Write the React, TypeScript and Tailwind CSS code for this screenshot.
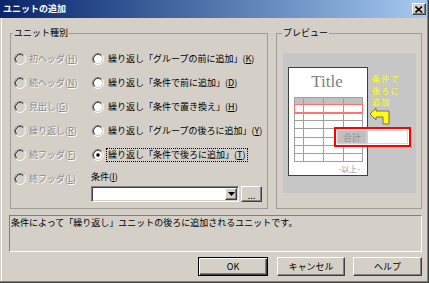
import React from "react";

const raised =
  "bg-[#d4d0c8] border border-t-white border-l-white border-r-[#404040] border-b-[#404040] shadow-[inset_-1px_-1px_0_#808080,inset_1px_1px_0_#d4d0c8]";

function Radio({ disabled, checked }: { disabled?: boolean; checked?: boolean }) {
  const bg = disabled ? "#d4d0c8" : "#ffffff";
  return (
    <svg width="12" height="12" viewBox="0 0 12 12" className="shrink-0">
      <circle cx="6" cy="6" r="4.2" fill={bg} />
      <path d="M2.11 9.89 A5.5 5.5 0 0 1 9.89 2.11" fill="none" stroke="#808080" strokeWidth="1" />
      <path d="M9.89 2.11 A5.5 5.5 0 0 1 2.11 9.89" fill="none" stroke="#ffffff" strokeWidth="1" />
      <path d="M2.82 9.18 A4.5 4.5 0 0 1 9.18 2.82" fill="none" stroke="#404040" strokeWidth="1" />
      <path d="M9.18 2.82 A4.5 4.5 0 0 1 2.82 9.18" fill="none" stroke="#d4d0c8" strokeWidth="1" />
      {checked && <circle cx="6" cy="6" r="1.8" fill="#000" />}
    </svg>
  );
}

function Mn({ pre, k }: { pre: string; k: string }) {
  return (
    <>
      {pre}(<u className="underline-offset-1">{k}</u>)
    </>
  );
}

const disabledText = "text-[#8a8a8a] [text-shadow:1px_1px_0_#ffffff]";

function Row1({ pre, k }: { pre: string; k: string }) {
  return (
    <div className="h-[24px] flex items-center gap-[3px]">
      <Radio disabled />
      <span className={`whitespace-nowrap ${disabledText}`}>
        <Mn pre={pre} k={k} />
      </span>
    </div>
  );
}

function Row2({ pre, k, checked }: { pre: string; k: string; checked?: boolean }) {
  return (
    <div className="h-[24px] flex items-center gap-[2px] pl-[1px]">
      <Radio checked={checked} />
      <span
        className={`whitespace-nowrap text-black px-[1px] border ${
          checked ? "border-dotted border-black" : "border-transparent"
        }`}
      >
        <Mn pre={pre} k={k} />
      </span>
    </div>
  );
}

function Preview() {
  const cols = [11, 20, 40, 60, 79];
  const rows = [44, 51, 60, 67, 75, 84, 92, 100, 108];
  return (
    <div className="relative w-[133px] h-[140px]">
      <svg width="133" height="140" viewBox="0 0 133 140" className="block">
        <rect x="0" y="0" width="133" height="140" fill="#c6c6c6" />
        <rect x="5.5" y="14.5" width="79" height="108" fill="#ffffff" stroke="#404040" strokeWidth="1" />
        <text
          x="44"
          y="34"
          textAnchor="middle"
          fontFamily="'Liberation Serif', serif"
          fontSize="17"
          fill="#808080"
        >
          Title
        </text>
        <rect x="11" y="44" width="68" height="7" fill="#c0c0c0" />
        {cols.map((x) => (
          <line key={"c" + x} x1={x + 0.5} y1="44" x2={x + 0.5} y2="108" stroke="#a0a0a0" strokeWidth="1" />
        ))}
        {rows.map((y) => (
          <line key={"r" + y} x1="11" y1={y + 0.5} x2="80" y2={y + 0.5} stroke="#a0a0a0" strokeWidth="1" />
        ))}
        <rect x="11.5" y="51.5" width="68" height="8" fill="none" stroke="#ff7070" strokeWidth="1" />
        <text
          x="77"
          y="119"
          textAnchor="end"
          fontFamily="'Noto Sans CJK JP', sans-serif"
          fontSize="8"
          fill="#909090"
        >
          -以上-
        </text>
        <rect x="52" y="75" width="75" height="18" fill="#ffffff" stroke="#ff0000" strokeWidth="2" />
        <rect x="54" y="77" width="30" height="14" fill="#c0c0c0" stroke="#e0e0e0" strokeWidth="1" />
        <text
          x="69"
          y="87.5"
          textAnchor="middle"
          fontFamily="'Noto Sans CJK JP', sans-serif"
          fontSize="9"
          fill="#909090"
        >
          合計
        </text>
        <rect
          x="84.5"
          y="77.5"
          width="40"
          height="13"
          fill="none"
          stroke="#b0b0b0"
          strokeWidth="1"
          strokeDasharray="1 1"
        />
        <path
          d="M87 61 L93 55 L93 58 L106 58 L106 71 L100 71 L100 64 L93 64 L93 67 Z"
          fill="#ffff00"
          stroke="#707070"
          strokeWidth="1"
        />
      </svg>
      <div className="absolute left-[89px] top-[20px] text-[8px] leading-[11.7px] tracking-[1.3px] text-[#ffff00] whitespace-nowrap">
        条件で
        <br />
        後ろに
        <br />
        追加
      </div>
    </div>
  );
}

export default function App() {
  return (
    <div
      className="w-[429px] h-[283px] bg-[#d4d0c8] flex flex-col font-['Noto_Sans_CJK_JP','Noto_Sans',sans-serif] text-[9px] leading-[12px] text-black shadow-[inset_-1px_-1px_0_#404040,inset_-2px_-2px_0_#808080,inset_1px_0_0_#d4d0c8,inset_2px_0_0_#ffffff] overflow-hidden"
    >
      {/* Title bar */}
      <div className="w-[427px] h-[18px] shrink-0 flex items-center bg-linear-to-r from-[#0a246a] to-[#a6caf0]">
        <span className="pl-[3px] text-white font-bold text-[9px] flex-1">ユニットの追加</span>
        <div className={`w-[14px] h-[12px] mr-[1px] flex items-center justify-center ${raised}`}>
          <svg width="8" height="7" viewBox="0 0 8 7">
            <path d="M0.5 0.5 L7 6.5 M7 0.5 L0.5 6.5" stroke="#000" strokeWidth="1.6" />
          </svg>
        </div>
      </div>

      {/* Body */}
      <div className="flex-1 flex flex-col pl-[9px] pr-[7px]">
        <div className="mt-[9px] flex gap-[8px] h-[182px]">
          {/* Unit type */}
          <fieldset className="ml-[1px] w-[258px] h-full border border-[#a09d96]">
            <legend className="ml-[2px] px-[1px] leading-[12px]">ユニット種別</legend>
            <div className="pt-[8px] pl-[3px] grid grid-cols-[77px_1fr]">
              <div className="flex flex-col">
                <Row1 pre="初ヘッダ" k="H" />
                <Row1 pre="続ヘッダ" k="N" />
                <Row1 pre="見出し" k="G" />
                <Row1 pre="繰り返し" k="R" />
                <Row1 pre="続フッダ" k="F" />
                <Row1 pre="終フッダ" k="L" />
              </div>
              <div className="flex flex-col">
                <Row2 pre="繰り返し「グループの前に追加」" k="K" />
                <Row2 pre="繰り返し「条件で前に追加」" k="D" />
                <Row2 pre="繰り返し「条件で置き換え」" k="H" />
                <Row2 pre="繰り返し「グループの後ろに追加」" k="Y" />
                <Row2 pre="繰り返し「条件で後ろに追加」" k="T" checked />
                <div className="flex flex-col pt-[4px]">
                  <span className="leading-[12px]">
                    <Mn pre="条件" k="I" />
                  </span>
                  <div className="mt-[3px] flex gap-[2px]">
                    <div className="w-[148px] h-[16px] bg-white border border-t-[#808080] border-l-[#808080] border-r-white border-b-white shadow-[inset_1px_1px_0_#404040,inset_-1px_-1px_0_#d4d0c8] flex justify-end p-[1px]">
                      <div className={`w-[12px] h-full flex items-center justify-center ${raised}`}>
                        <svg width="7" height="4" viewBox="0 0 7 4">
                          <path d="M0 0 L7 0 L3.5 4 Z" fill="#000" />
                        </svg>
                      </div>
                    </div>
                    <div className={`w-[21px] h-[16px] flex items-end justify-center pb-[2px] ${raised}`}>
                      <span className="leading-[6px] text-[9px]">...</span>
                    </div>
                  </div>
                </div>
              </div>
            </div>
          </fieldset>

          {/* Preview */}
          <fieldset className="w-[146px] h-full border border-[#a09d96]">
            <legend className="ml-[5px] px-[1px] leading-[12px]">プレビュー</legend>
            <div className="pt-[14px] pl-[6px]">
              <Preview />
            </div>
          </fieldset>
        </div>

        {/* Description */}
        <div className="mt-[6px] h-[37px] border border-t-[#808080] border-l-[#808080] border-r-white border-b-white pl-[1px] pt-[1px]">
          条件によって「繰り返し」ユニットの後ろに追加されるユニットです。
        </div>

        {/* Buttons */}
        <div className="mt-[5px] flex justify-end">
          <button className="w-[70px] h-[19px] bg-[#d4d0c8] border border-black shadow-[inset_1px_1px_0_#ffffff,inset_-1px_-1px_0_#404040,inset_-2px_-2px_0_#808080] text-[9px] leading-[12px]">
            OK
          </button>
          <button className={`ml-[9px] w-[68px] h-[19px] text-[9px] leading-[12px] ${raised}`}>キャンセル</button>
          <button className={`ml-[8px] w-[69px] h-[19px] text-[9px] leading-[12px] ${raised}`}>ヘルプ</button>
        </div>
      </div>
    </div>
  );
}
